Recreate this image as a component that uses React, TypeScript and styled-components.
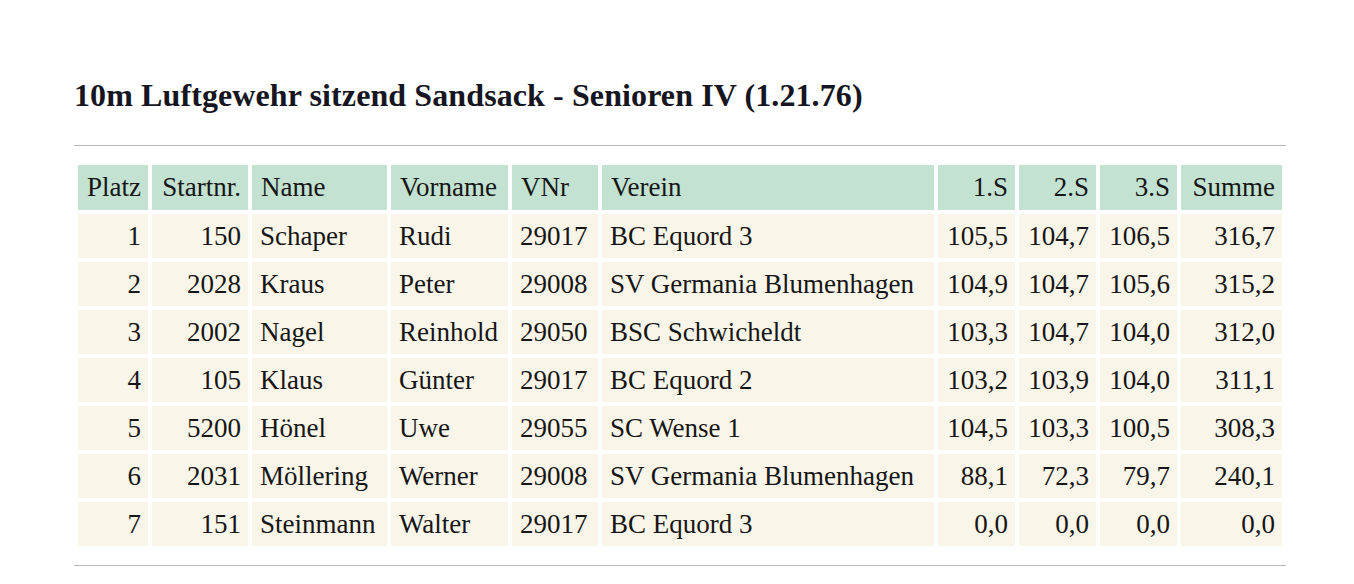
import React from "react";
import styled, { createGlobalStyle } from "styled-components";

const Global = createGlobalStyle`
  html, body { margin: 0; padding: 0; background: #ffffff; }
  body { font-family: "Liberation Serif", "Times New Roman", serif; color: #1c1c1c; }
`;

const Page = styled.div`
  padding: 77px 70px 0 74px;
  width: 1212px;
`;

const Title = styled.h1`
  margin: 0;
  font-size: 32px;
  line-height: 36px;
  font-weight: bold;
  color: #161622;
  letter-spacing: 0.1px;
`;

const Rule = styled.hr`
  margin: 0;
  border: 0;
  height: 1px;
  background: #b4b8bc;
`;

const TopRule = styled(Rule)`
  margin-top: 32px;
`;

const BottomRule = styled(Rule)`
  margin-top: 15px;
`;

const Table = styled.table`
  margin-top: 15px;
  width: 1212px;
  border-collapse: separate;
  border-spacing: 4px;
  table-layout: fixed;
  font-size: 27px;
`;

const Th = styled.th<{ $right?: boolean }>`
  background: #c3e2d1;
  font-weight: normal;
  height: 45px;
  padding: 0 7px 0 9px;
  text-align: ${(p) => (p.$right ? "right" : "left")};
  white-space: nowrap;
  color: #161616;
`;

const Td = styled.td<{ $right?: boolean }>`
  background: #f9f5e8;
  height: 44px;
  padding: 0 7px 0 8px;
  text-align: ${(p) => (p.$right ? "right" : "left")};
  white-space: nowrap;
  color: #161616;
`;

type Col = { label: string; width: number; right?: boolean };

const cols: Col[] = [
  { label: "Platz", width: 70, right: true },
  { label: "Startnr.", width: 96, right: true },
  { label: "Name", width: 135 },
  { label: "Vorname", width: 117 },
  { label: "VNr", width: 86 },
  { label: "Verein", width: 332 },
  { label: "1.S", width: 77, right: true },
  { label: "2.S", width: 77, right: true },
  { label: "3.S", width: 77, right: true },
  { label: "Summe", width: 101, right: true },
];

const rows: string[][] = [
  ["1", "150", "Schaper", "Rudi", "29017", "BC Equord 3", "105,5", "104,7", "106,5", "316,7"],
  ["2", "2028", "Kraus", "Peter", "29008", "SV Germania Blumenhagen", "104,9", "104,7", "105,6", "315,2"],
  ["3", "2002", "Nagel", "Reinhold", "29050", "BSC Schwicheldt", "103,3", "104,7", "104,0", "312,0"],
  ["4", "105", "Klaus", "Günter", "29017", "BC Equord 2", "103,2", "103,9", "104,0", "311,1"],
  ["5", "5200", "Hönel", "Uwe", "29055", "SC Wense 1", "104,5", "103,3", "100,5", "308,3"],
  ["6", "2031", "Möllering", "Werner", "29008", "SV Germania Blumenhagen", "88,1", "72,3", "79,7", "240,1"],
  ["7", "151", "Steinmann", "Walter", "29017", "BC Equord 3", "0,0", "0,0", "0,0", "0,0"],
];

export default function App() {
  return (
    <>
      <Global />
      <Page>
        <Title>10m Luftgewehr sitzend Sandsack - Senioren IV (1.21.76)</Title>
        <TopRule />
        <Table>
          <colgroup>
            {cols.map((c) => (
              <col key={c.label} style={{ width: c.width }} />
            ))}
          </colgroup>
          <thead>
            <tr>
              {cols.map((c) => (
                <Th key={c.label} $right={c.right}>
                  {c.label}
                </Th>
              ))}
            </tr>
          </thead>
          <tbody>
            {rows.map((r) => (
              <tr key={r[0]}>
                {r.map((v, i) => (
                  <Td key={i} $right={cols[i].right}>
                    {v}
                  </Td>
                ))}
              </tr>
            ))}
          </tbody>
        </Table>
        <BottomRule />
      </Page>
    </>
  );
}
